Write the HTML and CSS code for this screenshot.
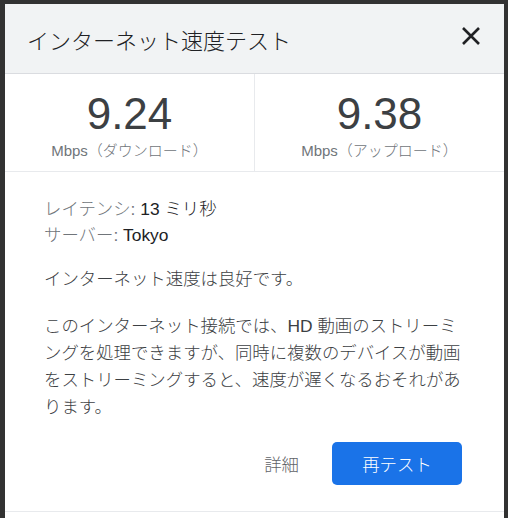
FILE: index.html
```html
<!DOCTYPE html>
<html lang="ja">
<head>
<meta charset="utf-8">
<link rel="stylesheet" href="styles.css">
</head>
<body>
<div class="dialog">
  <div class="header">
    <div class="title">インターネット速度テスト</div>
    <svg class="close" width="20" height="20" viewBox="0 0 20 20"><path d="M2 2L18 18M18 2L2 18" stroke="#202124" stroke-width="2.6" fill="none"/></svg>
  </div>
  <div class="stats">
    <div class="stat">
      <div class="num">9.24</div>
      <div class="unit"><span class="lat">Mbps</span>（ダウンロード）</div>
    </div>
    <div class="stat">
      <div class="num">9.38</div>
      <div class="unit"><span class="lat">Mbps</span>（アップロード）</div>
    </div>
  </div>
  <div class="body">
    <div class="meta">
      <div><span class="lbl">レイテンシ<span class="lat">: </span></span><span class="lat">13 </span>ミリ秒</div>
      <div><span class="lbl">サーバー<span class="lat">: </span></span><span class="lat">Tokyo</span></div>
    </div>
    <p class="summary">インターネット速度は良好です。</p>
    <p class="desc">このインターネット接続では、HD 動画のストリーミングを処理できますが、同時に複数のデバイスが動画をストリーミングすると、速度が遅くなるおそれがあります。</p>
    <div class="actions">
      <button class="link">詳細</button>
      <button class="primary">再テスト</button>
    </div>
  </div>
  <div class="footer"></div>
</div>
</body>
</html>
```
FILE: styles.css
```css
html, body {
  margin: 0;
  padding: 0;
  background: #323232;
  height: 100%;
  overflow: hidden;
}
body {
  font-family: "Liberation Sans", "Noto Sans CJK JP", sans-serif;
}
.dialog {
  margin: 4px 0 0 5px;
  width: 499px;
  background: #fff;
  height: 514px;
}
.header {
  height: 70px;
  background: #f1f3f4;
  border-bottom: 1px solid #dadce0;
  display: flex;
  align-items: center;
  justify-content: space-between;
  padding: 0 23px 0 22px;
  box-sizing: border-box;
}
.title {
  font-size: 22px;
  font-weight: 300;
  color: #202124;
}
.close {
  margin-top: -6px;
}
.stats {
  display: flex;
  height: 97px;
  border-bottom: 1px solid #e8eaed;
}
.stat {
  flex: 1;
  display: flex;
  flex-direction: column;
  align-items: center;
  padding-top: 15px;
}
.stat + .stat {
  border-left: 1px solid #e8eaed;
}
.num {
  font-size: 44px;
  line-height: 50px;
  color: #3c4043;
}
.unit {
  font-size: 15px;
  font-weight: 300;
  color: #70757a;
  line-height: 18px;
  margin-top: 3px;
}
.lat {
  font-weight: 400;
}
.body {
  padding: 24px 0 0 39px;
  width: 420px;
  font-size: 17.4px;
  font-weight: 300;
  color: #3c4043;
}
.meta {
  line-height: 26px;
  color: #202124;
}
.lbl {
  color: #70757a;
}
.summary {
  margin: 18px 0 0;
  line-height: 27px;
}
.desc {
  margin: 20px 0 0;
  line-height: 27px;
}
.actions {
  display: flex;
  justify-content: flex-end;
  align-items: center;
  margin: 21px 2px 0 0;
  gap: 17px;
}
button {
  font-family: inherit;
  font-size: 17.4px;
  font-weight: 300;
  border: none;
  cursor: pointer;
}
.link {
  background: none;
  color: #5f6368;
  padding: 0 16px;
}
.primary {
  width: 130px;
  height: 43px;
  background: #1a73e8;
  color: #fff;
  border-radius: 5px;
}
.footer {
  margin-top: 26px;
  border-top: 1px solid #e8eaed;
}
```
